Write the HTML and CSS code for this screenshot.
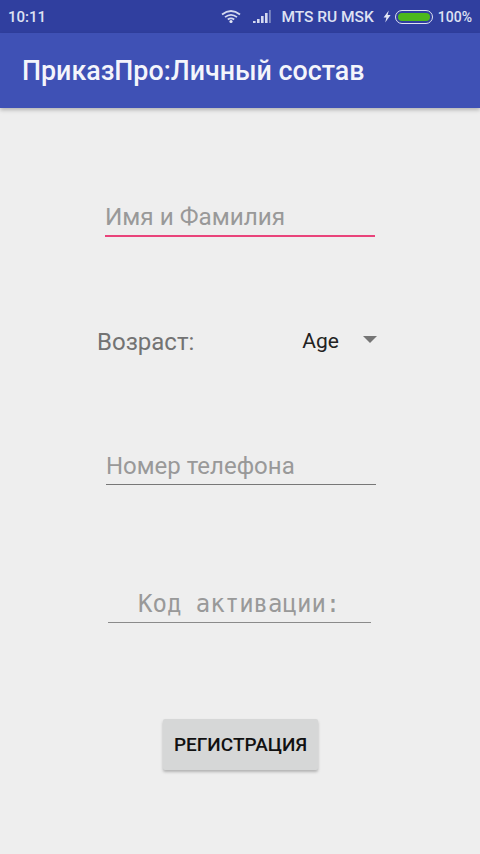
FILE: index.html
```html
<!DOCTYPE html>
<html lang="ru">

<head>
    <meta charset="utf-8" />
    <title>ПриказПро:Личный состав</title>
    <link rel="stylesheet" href="styles.css">
</head>

<body>
    <div class="status-bar">
        <span class="time">10:11</span>
        <div class="status-right">
            <svg class="wifi" width="20" height="15" viewBox="0 0 20 14">
                <path d="M1 5 Q10 -2 19 5" fill="none" stroke="#d5daf0" stroke-width="1.8" />
                <path d="M4 7.6 Q10 3 16 7.6" fill="none" stroke="#d5daf0" stroke-width="1.8" />
                <path d="M6.8 10 Q10 7.6 13.2 10" fill="none" stroke="#d5daf0" stroke-width="1.8" />
                <circle cx="10" cy="12" r="1.6" fill="#e4e7f5" />
            </svg>
            <svg class="signal" width="20" height="14" viewBox="0 0 20 14">
                <rect x="1" y="11" width="2.6" height="2" fill="#d5daf0" />
                <rect x="5" y="9" width="2.6" height="4" fill="#d5daf0" />
                <rect x="9" y="6" width="2.6" height="7" fill="#d5daf0" />
                <rect x="13" y="3" width="2.6" height="10" fill="#d5daf0" />
                <rect x="17" y="0" width="1.8" height="13" fill="#7f8ac2" />
            </svg>
            <span class="carrier">MTS RU MSK</span>
            <svg class="bolt" width="8" height="13" viewBox="0 0 8 12">
                <path d="M5.8 0 L.6 7 H3.4 L2.2 12 L7.6 4.6 H4.6 Z" fill="#e4e7f5" />
            </svg>
            <div class="battery">
                <div class="battery-fill"></div>
            </div>
            <span class="percent">100%</span>
        </div>
    </div>

    <header class="app-bar">
        <h1>ПриказПро:Личный состав</h1>
    </header>

    <main class="form">
        <div class="field field-name active">
            <span class="hint">Имя и Фамилия</span>
        </div>

        <div class="age-row">
            <span class="age-label">Возраст:</span>
            <div class="spinner">
                <span class="spinner-value">Age</span>
                <span class="spinner-arrow"></span>
            </div>
        </div>

        <div class="field field-phone">
            <span class="hint">Номер телефона</span>
        </div>

        <div class="field field-code">
            <span class="hint">Код активации:</span>
        </div>

        <button class="submit">РЕГИСТРАЦИЯ</button>
    </main>
</body>

</html>
```

FILE: styles.css
```css
*,
*::before,
*::after {
    margin: 0;
    padding: 0;
    box-sizing: border-box;
}

body {
    width: 480px;
    height: 854px;
    overflow: hidden;
    background: #eeeeee;
    font-family: Roboto, "Noto Sans", sans-serif;
}

.status-bar {
    height: 33px;
    padding: 0 8px;
    display: flex;
    align-items: center;
    justify-content: space-between;
    background: #303f9f;
    color: #dfe2f3;
    font-size: 15px;
    font-weight: 500;
}

.status-right {
    display: flex;
    align-items: center;
}

.wifi {
    margin-right: 11px;
}

.signal {
    margin-right: 9px;
}

.carrier {
    margin-right: 9px;
    font-size: 15.5px;
}

.bolt {
    margin-right: 4px;
}

.battery {
    width: 38px;
    height: 14px;
    margin-right: 5px;
    padding: 2px;
    border: 1px solid #dfe2f3;
    border-radius: 7px;
}

.battery-fill {
    height: 100%;
    background: #4cb81c;
    border-radius: 4px;
}

.percent {
    font-size: 14px;
}

.app-bar {
    height: 75px;
    padding: 0 22px;
    display: flex;
    align-items: center;
    background: #3f51b5;
    box-shadow: 0 2px 4px rgba(0, 0, 0, .25);
}

.app-bar h1 {
    color: #f4f5fb;
    font-size: 26.8px;
    font-weight: 500;
}

.form {
    display: flex;
    flex-direction: column;
}

.field {
    display: flex;
    align-items: flex-end;
    border-bottom: 1px solid #777777;
}

.hint {
    color: #999999;
    font-size: 24px;
    line-height: 30px;
}

.field-name {
    width: 270px;
    height: 36px;
    margin: 93px 0 0 105px;
    padding-bottom: 3px;
    border-bottom: 2px solid #e9437a;
}

.field-name .hint {
    font-size: 24.3px;
}

.age-row {
    width: 280px;
    margin: 90px 0 0 97px;
    display: flex;
    justify-content: space-between;
    align-items: center;
}

.age-label {
    color: #737373;
    font-size: 24px;
    line-height: 30px;
}

.spinner {
    display: flex;
    align-items: center;
    gap: 24px;
    margin-top: -2px;
}

.spinner-value {
    color: #222222;
    font-size: 21px;
}

.spinner-arrow {
    width: 0;
    height: 0;
    margin-top: -3px;
    border-left: 7px solid transparent;
    border-right: 7px solid transparent;
    border-top: 7px solid #757575;
}

.field-phone {
    width: 270px;
    height: 36px;
    margin: 92px 0 0 106px;
    padding-bottom: 3px;
}

.field-code {
    width: 263px;
    height: 36px;
    margin: 102px 0 0 108px;
    padding: 0 0 3px 30px;
    border-bottom-color: #8a8a8a;
}

.field-code .hint {
    font-family: "DejaVu Sans Mono", monospace;
    font-size: 24px;
}

.submit {
    width: 155px;
    height: 51px;
    margin: 96px 0 0 163px;
    background: #d6d7d7;
    border: none;
    border-radius: 2px;
    box-shadow: 0 2px 3px rgba(0, 0, 0, .25);
    color: #111111;
    font-family: inherit;
    font-size: 19px;
    font-weight: 500;
}
```
